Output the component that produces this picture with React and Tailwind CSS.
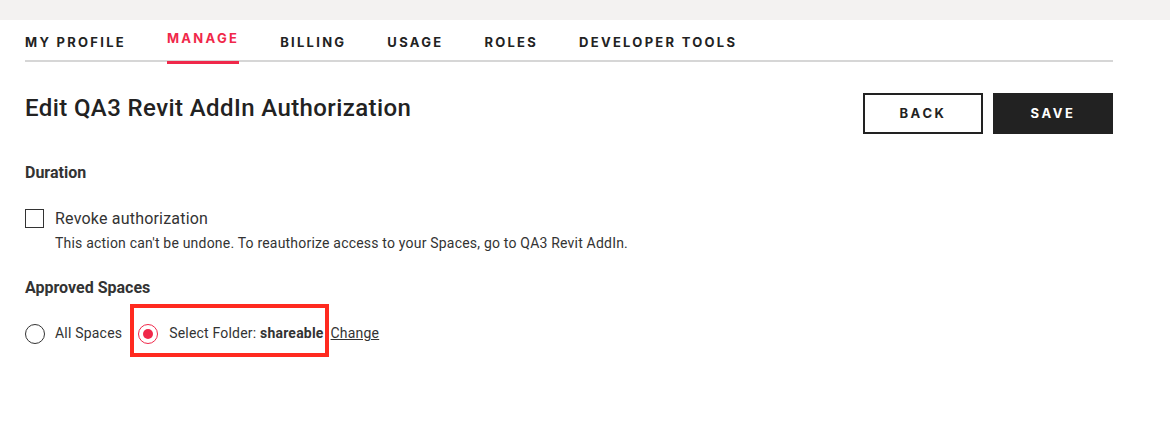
import { useState } from "react";

const tabs = ["MY PROFILE", "MANAGE", "BILLING", "USAGE", "ROLES", "DEVELOPER TOOLS"];

export default function App() {
  const [active] = useState("MANAGE");
  const [revoke, setRevoke] = useState(false);
  const [scope, setScope] = useState("folder");

  return (
    <div className="min-h-screen bg-white text-[#222] font-['Roboto',sans-serif]">
      <div className="h-[20px] bg-[#f3f2f1]" />

      <div className="pl-[25px] w-[1113px]">
        <nav className="flex gap-[41px] border-b-2 border-[#d6d6d6] h-[42px]">
          {tabs.map((t) => (
            <button
              key={t}
              className={
                t === active
                  ? "relative h-[42px] pb-[4px] text-[13px] font-bold tracking-[0.175em] text-[#f0284a] font-['Inter',sans-serif]"
                  : "relative h-[42px] pt-[3px] text-[13px] font-bold tracking-[0.175em] text-[#222] font-['Inter',sans-serif]"
              }
            >
              {t}
              {t === active && (
                <span className="absolute left-0 right-0 -bottom-[2px] h-[3px] bg-[#f0284a]" />
              )}
            </button>
          ))}
        </nav>

        <div className="flex items-start justify-between mt-[31px]">
          <h1 className="text-[24px] font-medium leading-[30px] tracking-[0.4px]">
            Edit QA3 Revit AddIn Authorization
          </h1>
          <div className="flex gap-[10px]">
            <button className="w-[120px] h-[41px] border-2 border-[#222] text-[13px] font-bold tracking-[0.2em] font-['Inter',sans-serif]">
              BACK
            </button>
            <button className="w-[120px] h-[41px] bg-[#222] text-white text-[13px] font-bold tracking-[0.2em] font-['Inter',sans-serif]">
              SAVE
            </button>
          </div>
        </div>

        <h2 className="mt-[27px] text-[16px] font-bold text-[#333]">Duration</h2>

        <div className="mt-[23px] flex items-start gap-[11px]">
          <button
            onClick={() => setRevoke(!revoke)}
            className="w-[19px] h-[19px] border border-[#333] bg-white mt-[1px] shrink-0"
          />
          <div>
            <div className="text-[16px] leading-[22px] tracking-[0.2px] text-[#333]">Revoke authorization</div>
            <div className="mt-[3px] text-[14px] tracking-[0.2px] text-[#333]">
              This action can't be undone. To reauthorize access to your Spaces, go to QA3 Revit AddIn.
            </div>
          </div>
        </div>

        <h2 className="mt-[22px] text-[16px] font-bold text-[#333]">Approved Spaces</h2>

        <div className="mt-[23px] flex items-center">
          <label className="flex items-center gap-[10px] cursor-pointer" onClick={() => setScope("all")}>
            <span className="w-[20px] h-[20px] rounded-full border border-[#333] flex items-center justify-center">
              {scope === "all" && <span className="w-[10px] h-[10px] rounded-full bg-[#f0284a]" />}
            </span>
            <span className="text-[14px] tracking-[0.2px] text-[#333]">All Spaces</span>
          </label>

          <div className="relative ml-[16px] flex items-center">
            <span className="absolute -left-[8px] -top-[19px] w-[199px] h-[53px] border-[4px] border-[#ff2a1f] pointer-events-none" />
            <label className="flex items-center gap-[11px] cursor-pointer" onClick={() => setScope("folder")}>
              <span
                className={
                  scope === "folder"
                    ? "w-[20px] h-[20px] rounded-full border border-[#f0284a] flex items-center justify-center"
                    : "w-[20px] h-[20px] rounded-full border border-[#333] flex items-center justify-center"
                }
              >
                {scope === "folder" && <span className="w-[10px] h-[10px] rounded-full bg-[#f0284a]" />}
              </span>
              <span className="text-[14px] tracking-[0.2px] text-[#333]">
                Select Folder: <span className="font-bold">shareable</span>
              </span>
            </label>
            <a href="#" className="ml-[7px] text-[14px] tracking-[0.2px] text-[#333] underline">
              Change
            </a>
          </div>
        </div>
      </div>
    </div>
  );
}
